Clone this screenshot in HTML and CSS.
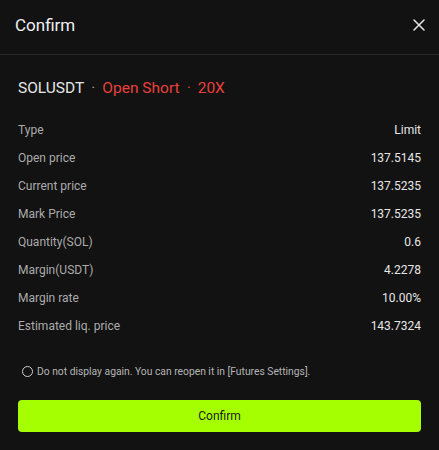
FILE: index.html
```html
<!DOCTYPE html>
<html lang="en">
<head>
    <meta charset="UTF-8">
    <title>Confirm</title>
    <link rel="stylesheet" href="styles.css">
</head>
<body>

<div class="dialog">
    <div class="header">
        <span class="header-title">Confirm</span>
        <svg class="close" width="12" height="12" viewBox="0 0 12 12">
            <path d="M1 1L11 11M11 1L1 11" stroke="#e6e6e6" stroke-width="1.5" stroke-linecap="round"/>
        </svg>
    </div>
    <div class="body">
        <div class="pair">
            <span class="symbol">SOLUSDT</span>
            <span class="dot">·</span>
            <span class="side">Open Short</span>
            <span class="dot red">·</span>
            <span class="side">20X</span>
        </div>
        <div class="rows">
            <div class="row"><span>Type</span><span class="val">Limit</span></div>
            <div class="row"><span>Open price</span><span class="val">137.5145</span></div>
            <div class="row"><span>Current price</span><span class="val">137.5235</span></div>
            <div class="row"><span>Mark Price</span><span class="val">137.5235</span></div>
            <div class="row"><span>Quantity(SOL)</span><span class="val">0.6</span></div>
            <div class="row"><span>Margin(USDT)</span><span class="val">4.2278</span></div>
            <div class="row"><span>Margin rate</span><span class="val">10.00%</span></div>
            <div class="row"><span>Estimated liq. price</span><span class="val">143.7324</span></div>
        </div>
        <label class="check">
            <span class="circle"></span>
            Do not display again. You can reopen it in [Futures Settings].
        </label>
        <button class="confirm-btn">Confirm</button>
    </div>
</div>

</body>
</html>
```

FILE: styles.css
```css
body {
    margin: 0;
    padding: 0;
    background-color: #121212;
    font-family: Roboto, "Noto Sans", Arial, sans-serif;
    color: #e6e6e6;
}
.dialog {
    width: 439px;
    height: 450px;
    background-color: #121212;
}
.header {
    height: 54px;
    padding: 0 14px 0 15px;
    display: flex;
    align-items: center;
    justify-content: space-between;
    border-bottom: 1px solid #262626;
}
.header-title {
    font-size: 17px;
    color: #f0f0f0;
    padding-bottom: 4px;
}
.close {
    margin-bottom: 4px;
}
.body {
    padding: 0 18px;
}
.pair {
    margin-top: 22px;
    height: 22px;
    display: flex;
    align-items: center;
    font-size: 15.5px;
}
.symbol {
    color: #e6e6e6;
}
.dot {
    color: #9a9a9a;
    margin: 0 7px;
}
.dot.red {
    color: #e8413c;
}
.side {
    color: #e8413c;
}
.rows {
    margin-top: 17px;
}
.row {
    height: 28px;
    display: flex;
    align-items: center;
    justify-content: space-between;
    font-size: 12px;
    color: #ababab;
}
.row .val {
    color: #e6e6e6;
}
.check {
    margin-top: 25px;
    display: flex;
    align-items: center;
    font-size: 10.3px;
    color: #b5b5b5;
    padding-left: 4px;
}
.circle {
    width: 9px;
    height: 9px;
    border: 1px solid #cfcfcf;
    border-radius: 50%;
    margin-right: 4px;
}
.confirm-btn {
    margin-top: 22px;
    width: 100%;
    height: 32px;
    border: none;
    border-radius: 4px;
    background-color: #a6ff00;
    color: #1a1a1a;
    font-family: Roboto, "Noto Sans", Arial, sans-serif;
    font-size: 12px;
    cursor: pointer;
}
```
